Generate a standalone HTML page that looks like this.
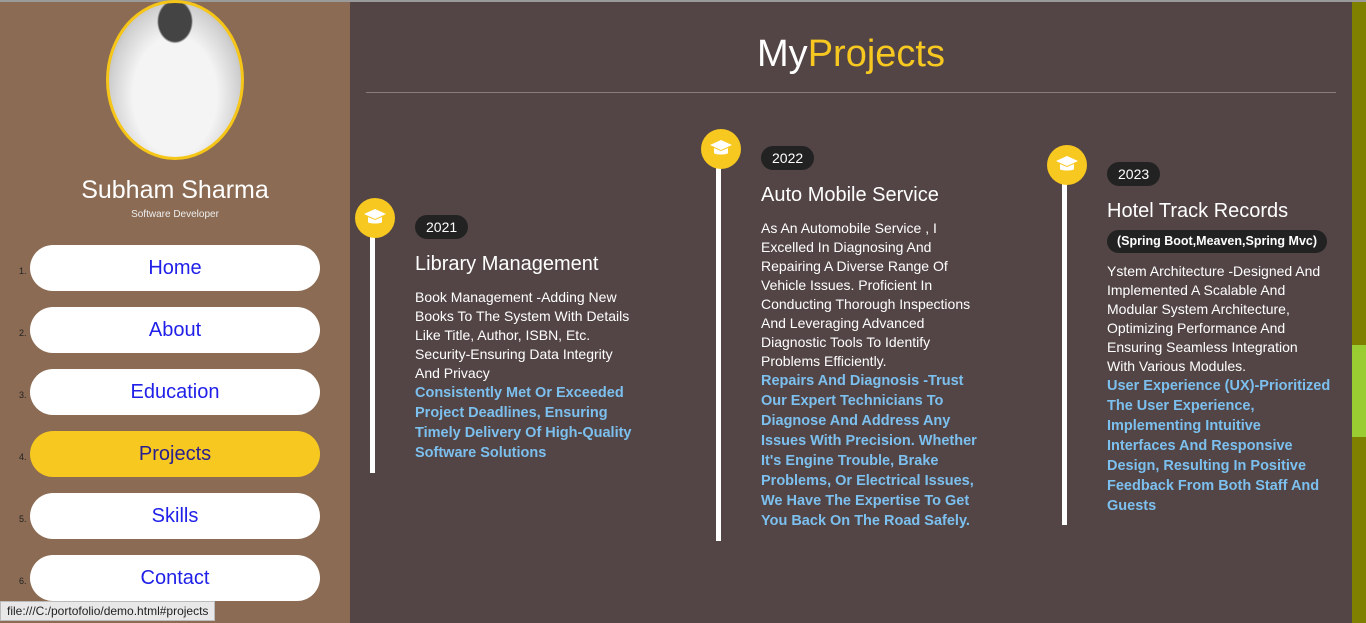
<!DOCTYPE html>
<html><head><meta charset="utf-8"><style>
*{margin:0;padding:0;box-sizing:border-box}
body{width:1366px;height:623px;overflow:hidden;background:#534545;font-family:"Liberation Sans",sans-serif;position:relative}
.top{position:absolute;left:0;top:0;width:1366px;height:2px;background:#9a9a9a}
.side{position:absolute;left:0;top:2px;width:350px;height:621px;background:#8b6b53}
.photo{position:absolute;left:106px;top:-2px;width:138px;height:160px;border-radius:50%;border:3px solid #f5c518;background:radial-gradient(ellipse 18px 22px at 50% 12%,#444 0 90%,transparent 100%),radial-gradient(ellipse at 50% 60%,#f4f4f4 0 45%,#cfcfcf 70%,#888 100%)}
.name{position:absolute;left:0;width:350px;top:174px;text-align:center;color:#fff;font-size:25px}
.role{position:absolute;left:0;width:350px;top:207px;text-align:center;color:#eee;font-size:10px}
.nav{position:absolute;left:30px;width:290px;height:46px;border-radius:23px;background:#fff;color:#2020e8;font-size:20px;text-align:center;line-height:47px}
.nav.act{background:#f7c820;color:#2a2090}
.num{position:absolute;left:19px;font-size:9px;color:#222}
.main{position:absolute;left:350px;top:2px;width:1002px;height:621px}
h1{position:absolute;left:0;width:1002px;top:31px;text-align:center;font-weight:normal;font-size:38px;color:#fff}
h1 span{color:#f7c820}
.hr{position:absolute;left:16px;top:90px;width:970px;height:1px;background:#8a7c7c}
.scroll{position:absolute;left:1352px;top:2px;width:14px;height:621px;background:#808000}
.thumb{position:absolute;left:1352px;top:345px;width:14px;height:92px;background:#9acd32}
.ic{position:absolute;width:40px;height:40px;border-radius:50%;background:#f7c820}
.ic svg{position:absolute;left:9px;top:10px}
.ln{position:absolute;width:5px;background:#fff}
.yr{position:absolute;height:24px;padding:0 11px;border-radius:12px;background:#222;color:#fff;font-size:14px;line-height:24px}
.tt{position:absolute;color:#fff;font-size:20px}
.tx{position:absolute;color:#fff;font-size:14px;line-height:19px;white-space:nowrap}
.bl{color:#7cc0ef;font-size:14.5px;line-height:20px;font-weight:bold}
.tag{position:absolute;height:23px;padding:0 10px;border-radius:12px;background:#222;color:#fff;font-size:12.5px;font-weight:bold;line-height:23px}
.status{position:absolute;left:0;top:601px;height:20px;padding:0 6px;background:#e8e8e8;border:1px solid #bbb;font-size:12px;line-height:18px;color:#222}
</style></head><body>
<div class="top"></div>
<div class="side">
<div class="photo"></div>
<div class="name">Subham Sharma</div>
<div class="role">Software Developer</div>
</div>
<div class="num" style="top:266px">1.</div><div class="nav" style="top:245px">Home</div>
<div class="num" style="top:328px">2.</div><div class="nav" style="top:307px">About</div>
<div class="num" style="top:390px">3.</div><div class="nav" style="top:369px">Education</div>
<div class="num" style="top:452px">4.</div><div class="nav act" style="top:431px">Projects</div>
<div class="num" style="top:514px">5.</div><div class="nav" style="top:493px">Skills</div>
<div class="num" style="top:576px">6.</div><div class="nav" style="top:555px">Contact</div>
<div class="main">
<h1>My<span>Projects</span></h1>
<div class="hr"></div>
</div>
<svg width="0" height="0" style="position:absolute"><defs><g id="cap"><path d="M11 1L0 6l11 5 11-5z" fill="#fff"/><path d="M4 9v5c0 2 14 2 14 0V9l-7 3z" fill="#fff"/></g></defs></svg>

<div class="ln" style="left:370px;top:232px;height:241px"></div>
<div class="ic" style="left:355px;top:198px"><svg width="22" height="18"><use href="#cap"/></svg></div>
<div class="yr" style="left:415px;top:215px">2021</div>
<div class="tt" style="left:415px;top:253px">Library Management</div>
<div class="tx" style="left:415px;top:288px">Book Management -Adding New<br>Books To The System With Details<br>Like Title, Author, ISBN, Etc.<br>Security-Ensuring Data Integrity<br>And Privacy<div class="bl">Consistently Met Or Exceeded<br>Project Deadlines, Ensuring<br>Timely Delivery Of High-Quality<br>Software Solutions</div></div>

<div class="ln" style="left:716px;top:163px;height:378px"></div>
<div class="ic" style="left:701px;top:129px"><svg width="22" height="18"><use href="#cap"/></svg></div>
<div class="yr" style="left:761px;top:146px">2022</div>
<div class="tt" style="left:761px;top:184px">Auto Mobile Service</div>
<div class="tx" style="left:761px;top:219px">As An Automobile Service , I<br>Excelled In Diagnosing And<br>Repairing A Diverse Range Of<br>Vehicle Issues. Proficient In<br>Conducting Thorough Inspections<br>And Leveraging Advanced<br>Diagnostic Tools To Identify<br>Problems Efficiently.<div class="bl">Repairs And Diagnosis -Trust<br>Our Expert Technicians To<br>Diagnose And Address Any<br>Issues With Precision. Whether<br>It's Engine Trouble, Brake<br>Problems, Or Electrical Issues,<br>We Have The Expertise To Get<br>You Back On The Road Safely.</div></div>

<div class="ln" style="left:1062px;top:179px;height:346px"></div>
<div class="ic" style="left:1047px;top:145px"><svg width="22" height="18"><use href="#cap"/></svg></div>
<div class="yr" style="left:1107px;top:162px">2023</div>
<div class="tt" style="left:1107px;top:200px">Hotel Track Records</div>
<div class="tag" style="left:1107px;top:230px">(Spring Boot,Meaven,Spring Mvc)</div>
<div class="tx" style="left:1107px;top:262px">Ystem Architecture -Designed And<br>Implemented A Scalable And<br>Modular System Architecture,<br>Optimizing Performance And<br>Ensuring Seamless Integration<br>With Various Modules.<div class="bl">User Experience (UX)-Prioritized<br>The User Experience,<br>Implementing Intuitive<br>Interfaces And Responsive<br>Design, Resulting In Positive<br>Feedback From Both Staff And<br>Guests</div></div>

<div class="scroll"></div><div class="thumb"></div>
<div class="status">file:///C:/portofolio/demo.html#projects</div>
</body></html>
